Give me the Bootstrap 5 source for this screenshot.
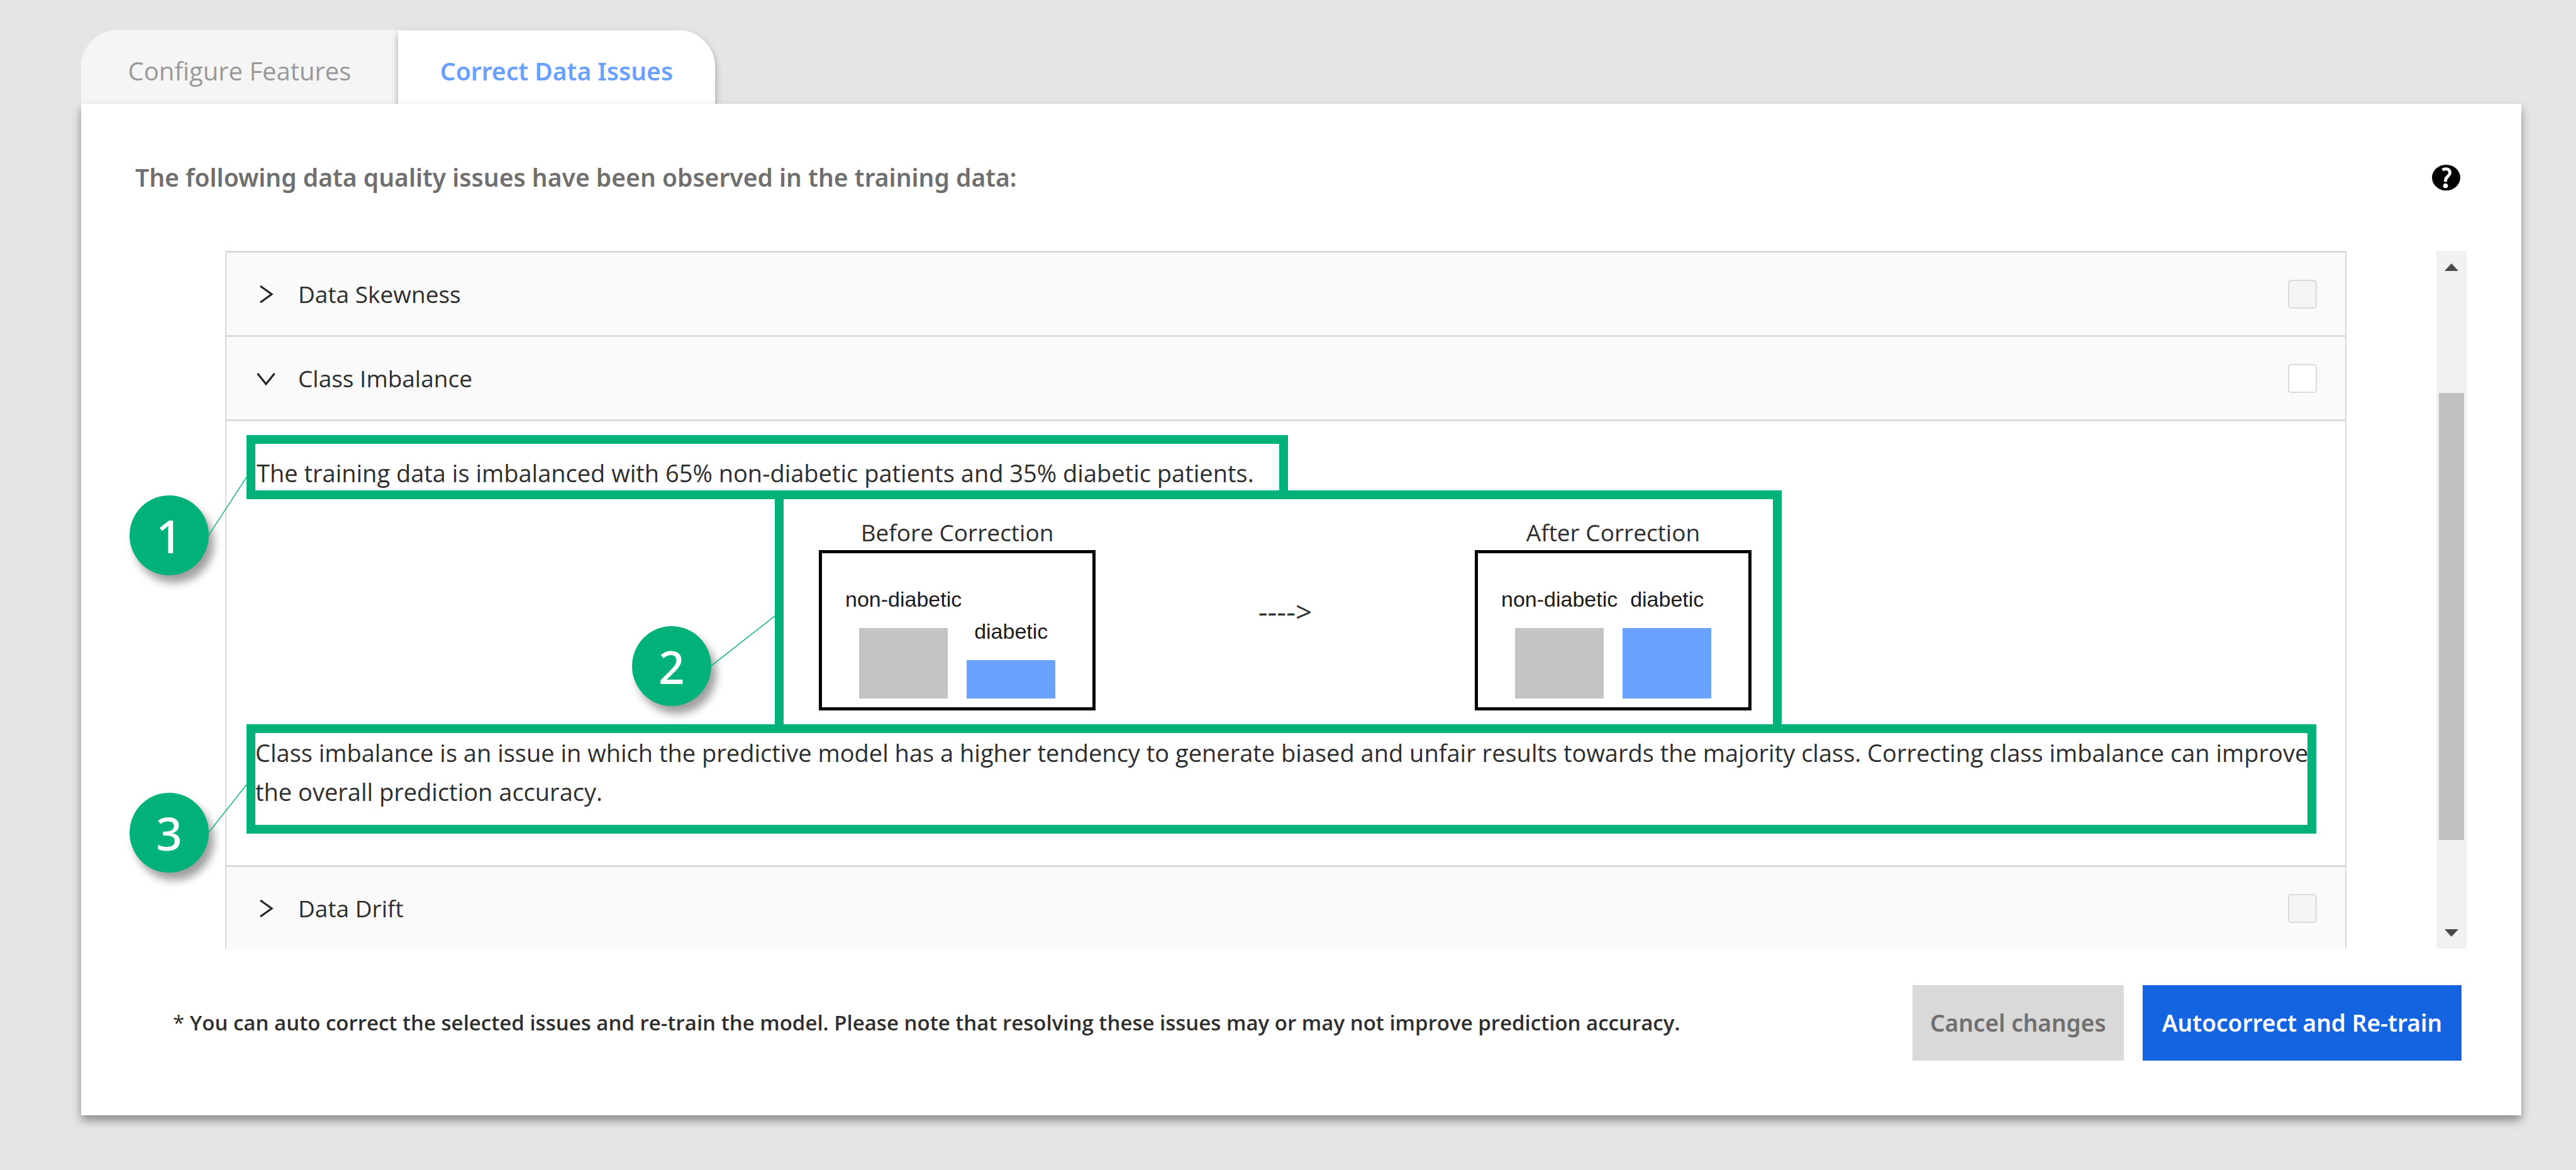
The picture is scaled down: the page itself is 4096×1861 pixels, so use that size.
<!doctype html>
<html lang="en">
<head>
<meta charset="utf-8">
<meta name="viewport" content="width=device-width, initial-scale=1">
<title>Correct Data Issues</title>
<link rel="stylesheet" href="https://cdn.jsdelivr.net/npm/bootstrap@5.3.0/dist/css/bootstrap.min.css">
<style>
  :root { --accent: #00b279; --line: #dadada; }
  body { background: #e5e5e5; color: #2e2e2e; font-family: "Open Sans", "Noto Sans", sans-serif; font-size: 38px; line-height: 62px; }
  .shell { padding: 48px 87px 87px 129px; }
  .semi { font-family: "Noto Sans", "Open Sans", sans-serif; font-weight: 600; }

  .page-tabs { border: 0; }
  .page-tabs .nav-link { width: 504px; height: 117px; margin: 0; border: 0; border-radius: 0; padding: 12px 0 0; line-height: 56px; background: #f5f5f5; color: #999; font-size: 40px; }
  .page-tabs .first-tab { border-top-left-radius: 58px; }
  .page-tabs .nav-link.active { border-top-right-radius: 58px; background: #fff; color: #6aa1ff; font-size: 39px; box-shadow: 0 6px 12px rgba(0,0,0,.35); }

  .panel { position: relative; background: #fff; padding: 87px 0; box-shadow: 0 8px 14px rgba(0,0,0,.4); }
  .panel-head { height: 60px; margin-bottom: 87px; padding: 0 97px 0 86px; }
  .panel-head h1 { font-size: 39px; line-height: 60px; color: #6f6f6f; }
  .help-btn { width: 45px; height: 41px; border: 0; padding: 0; background: none; }
  .help-btn svg, .chev svg { display: block; width: 100%; height: 100%; }

  .viewport { height: 1110px; overflow: hidden; padding: 0 87px 0 229px; gap: 143px; }
  .issues { min-width: 0; border: 2px solid var(--line); border-width: 0 2px; }
  .issue-head { height: 134px; border-top: 3px solid var(--line); background: #fafafa; padding: 0 45px 0 46px; }
  .issue-toggle { border: 0; background: none; padding: 0; gap: 34px; font-size: 37px; color: inherit; }
  .chev { width: 34px; height: 34px; }
  .issue-head .form-check-input { width: 46px; height: 46px; margin: 0; border: 2px solid var(--line); border-radius: 5px; background-color: #fff; opacity: 1; }
  .issue-head .form-check-input:disabled { background-color: #f4f4f4; }
  .issue-body { border-top: 3px solid var(--line); padding: 22px 46px 50px 32px; }

  .boxed { position: relative; border: 14px solid var(--accent); }
  .boxed + .boxed { margin-top: -14px; }
  .summary-box { width: fit-content; padding: 18px 40px 0 2px; line-height: 56px; }
  .chart-box { width: 1601px; margin-left: 840px; padding: 28px 34px 22px 56px; }
  .note-box { padding: 0 0 22px; white-space: nowrap; }

  .fig-title { font-size: 37px; line-height: 50px; margin-bottom: 3px; text-align: center; }
  .plot { width: 440px; height: 255px; border: 5px solid #000; padding: 0 0 14px 37px; gap: 8px; font-family: "Liberation Sans", Arial, sans-serif; font-size: 34px; line-height: 40px; color: #1c1c1c; }
  .series { gap: 26px; }
  .bar { width: 141px; }
  .bar-major { background: #c5c3c4; }
  .bar-minor { background: #68a1ff; }
  .arrow { font-size: 46px; line-height: 50px; padding-bottom: 8px; }

  .pin { position: absolute; display: flex; }
  .pin-dot { width: 126px; height: 127px; border-radius: 50%; background: var(--accent); color: #fff; font-family: "Noto Sans", sans-serif; font-weight: 500; font-size: 73px; line-height: 127px; text-align: center; box-shadow: 8px 12px 14px rgba(0,0,0,.38); }
  .pin-line { position: absolute; left: 126px; bottom: 64px; stroke: var(--accent); stroke-width: 1.4; }
  .pin-one { left: -200px; top: 82px; }
  .pin-two { left: -241px; top: 202px; }
  .pin-three { left: -200px; top: 95px; }

  .track { width: 48px; background: #f1f1f1; padding: 20px 4px 19px; }
  .track svg { width: 22px; height: 12px; fill: #4a4a4a; }
  .thumb { width: 40px; height: 711px; background: #c1c1c1; margin: 194px 0 auto; }

  .panel-foot { margin-top: 58px; padding: 0 95px 0 146px; gap: 30px; }
  .foot-note { font-weight: 600; font-size: 33px; }
  .foot-btn { height: 120px; border: 0; border-radius: 0; font-size: 37px; padding: 0 28px; }
  .foot-btn.btn-light { background: #d9d9d9; color: #6f6f6f; }
  .foot-btn.btn-primary { background: #1463e0; color: #fff; padding: 0 31px; }
</style>
<script src="https://cdn.jsdelivr.net/npm/bootstrap@5.3.0/dist/js/bootstrap.bundle.min.js"></script>
</head>
<body>
<main class="shell">
  <div class="nav nav-tabs page-tabs" role="tablist">
    <button class="nav-link first-tab" type="button" role="tab" aria-selected="false">Configure Features</button>
    <button class="nav-link active semi" type="button" role="tab" aria-selected="true">Correct Data Issues</button>
  </div>

  <section class="panel">
    <header class="panel-head d-flex justify-content-between align-items-center">
      <h1 class="semi m-0">The following data quality issues have been observed in the training data:</h1>
      <button class="help-btn" type="button" aria-label="Help">
        <svg viewBox="0 0 46 42" preserveAspectRatio="none"><ellipse cx="23" cy="21" rx="23" ry="21"/><path d="M17 8.600C23 5 30 7 29 14C28 19.500 22 19 22 26V28" fill="none" stroke="#fff" stroke-width="5"/><circle cx="22" cy="34.300" r="3.900" fill="#fff"/></svg>
      </button>
    </header>

    <div class="viewport d-flex">
      <div class="issues flex-grow-1">
        <div class="issue-head d-flex justify-content-between align-items-center">
          <button class="issue-toggle d-flex align-items-center" type="button" aria-expanded="false">
            <span class="chev"><svg viewBox="0 0 34 34"><path d="M8 4L26 17L8 30" fill="none" stroke="#262626" stroke-width="3.200"/></svg></span>Data Skewness
          </button>
          <input class="form-check-input" type="checkbox" aria-label="Data Skewness" disabled>
        </div>
        <div class="issue-head d-flex justify-content-between align-items-center">
          <button class="issue-toggle d-flex align-items-center" type="button" aria-expanded="true">
            <span class="chev"><svg viewBox="0 0 34 34"><path d="M3.500 9L17 26L30.500 9" fill="none" stroke="#262626" stroke-width="3.200"/></svg></span>Class Imbalance
          </button>
          <input class="form-check-input" type="checkbox" aria-label="Class Imbalance">
        </div>
        <div class="issue-body">
          <div class="boxed summary-box">
            The training data is imbalanced with 65% non-diabetic patients and 35% diabetic patients.
            <div class="pin pin-one"><span class="pin-dot">1</span><svg class="pin-line" width="60" height="92"><path d="M0 92L60 0"/></svg></div>
          </div>
          <div class="boxed chart-box d-flex justify-content-between align-items-center">
            <div>
              <div class="fig-title">Before Correction</div>
              <div class="plot d-flex align-items-end">
                <div class="series d-flex flex-column align-items-center"><span>non-diabetic</span><div class="bar bar-major" style="height:112px"></div></div>
                <div class="series d-flex flex-column align-items-center"><span>diabetic</span><div class="bar bar-minor" style="height:61px"></div></div>
              </div>
            </div>
            <div class="arrow">----&gt;</div>
            <div>
              <div class="fig-title">After Correction</div>
              <div class="plot d-flex align-items-end">
                <div class="series d-flex flex-column align-items-center"><span>non-diabetic</span><div class="bar bar-major" style="height:112px"></div></div>
                <div class="series d-flex flex-column align-items-center"><span>diabetic</span><div class="bar bar-minor" style="height:112px"></div></div>
              </div>
            </div>
            <div class="pin pin-two"><span class="pin-dot">2</span><svg class="pin-line" width="102" height="80"><path d="M0 80L102 0"/></svg></div>
          </div>
          <div class="boxed note-box">
            Class imbalance is an issue in which the predictive model has a higher tendency to generate biased and unfair results towards the majority class. Correcting class imbalance can improve<br>the overall prediction accuracy.
            <div class="pin pin-three"><span class="pin-dot">3</span><svg class="pin-line" width="60" height="76"><path d="M0 76L60 0"/></svg></div>
          </div>
        </div>
        <div class="issue-head d-flex justify-content-between align-items-center">
          <button class="issue-toggle d-flex align-items-center" type="button" aria-expanded="false">
            <span class="chev"><svg viewBox="0 0 34 34"><path d="M8 4L26 17L8 30" fill="none" stroke="#262626" stroke-width="3.200"/></svg></span>Data Drift
          </button>
          <input class="form-check-input" type="checkbox" aria-label="Data Drift" disabled>
        </div>
      </div>
      <div class="track d-flex flex-column align-items-center flex-shrink-0" aria-hidden="true">
        <svg viewBox="0 0 22 12"><path d="M0 12L11 0L22 12Z"/></svg>
        <div class="thumb"></div>
        <svg viewBox="0 0 22 12"><path d="M0 0L11 12L22 0Z"/></svg>
      </div>
    </div>

    <footer class="panel-foot d-flex align-items-center">
      <p class="foot-note m-0 me-auto"><span class="fw-normal">*</span> You can auto correct the selected issues and re-train the model. Please note that resolving these issues may or may not improve prediction accuracy.</p>
      <button class="btn btn-light foot-btn semi" type="button">Cancel changes</button>
      <button class="btn btn-primary foot-btn semi" type="button">Autocorrect and Re-train</button>
    </footer>
  </section>
</main>
</body>
</html>
